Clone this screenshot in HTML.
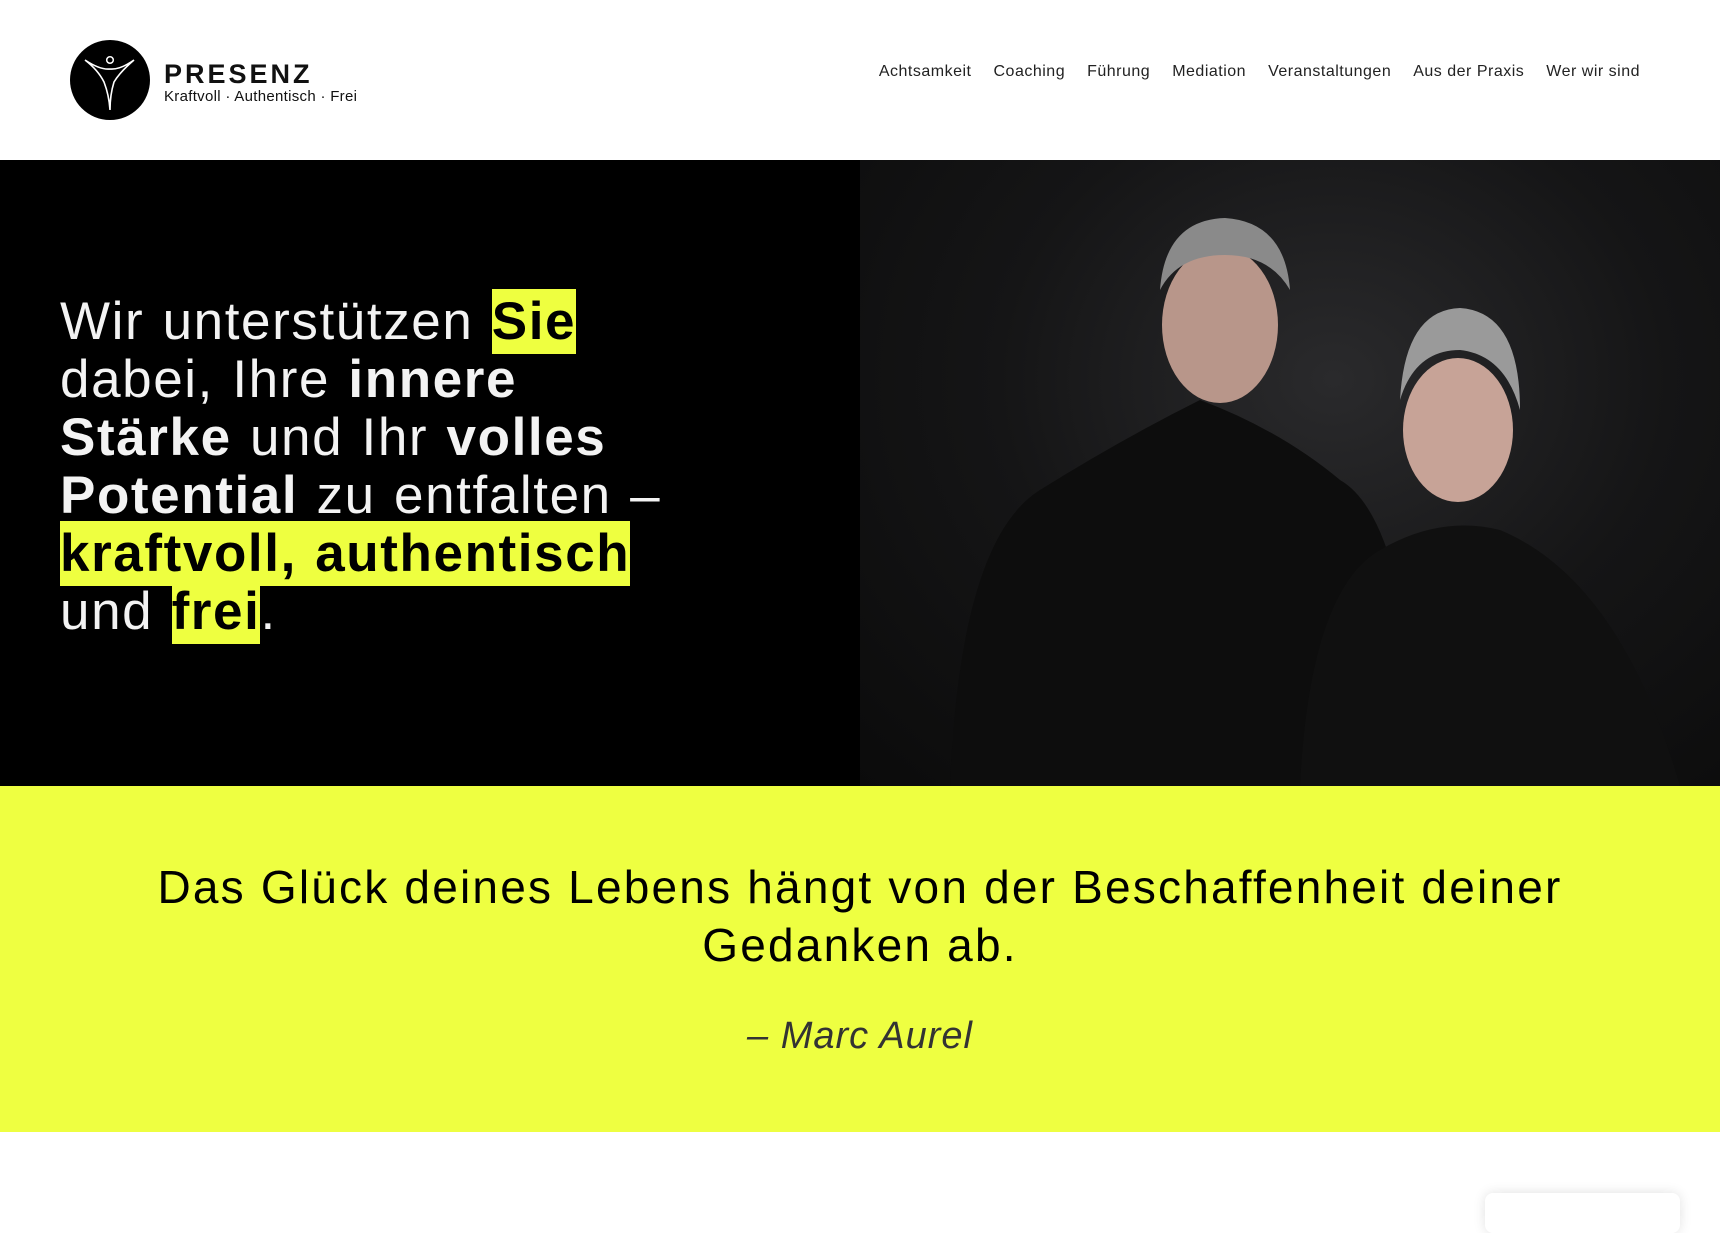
<!DOCTYPE html>
<html><head><meta charset="utf-8">
<style>
*{margin:0;padding:0;box-sizing:border-box}
body{width:1720px;height:1208px;overflow:hidden;background:#fff;font-family:"Liberation Sans",sans-serif;color:#111}
header{height:160px;position:relative}
.logo{position:absolute;left:70px;top:40px;width:80px;height:80px;border-radius:50%;background:#000}
.brand{position:absolute;left:164px;top:60px}
.brand b{display:block;font-size:27px;letter-spacing:3px;font-weight:700;line-height:28px}
.brand span{display:block;font-size:15px;line-height:16px;margin-top:1px;letter-spacing:.3px}
nav{position:absolute;right:80px;top:63px;font-size:16px;color:#222;display:flex;gap:22px;letter-spacing:.5px}
.hero{position:absolute;top:160px;left:0;width:1720px;height:626px;background:#000}
.photo{position:absolute;left:860px;top:0;width:860px;height:626px;background:radial-gradient(ellipse at 55% 35%,#2a2a2c 0%,#151516 50%,#0b0b0b 100%)}
h1{position:absolute;left:60px;top:133px;width:760px;font-size:53px;line-height:58px;font-weight:400;color:#f3f3f3;letter-spacing:1.6px;word-spacing:2px;white-space:nowrap}
h1 strong{font-weight:700}
.hl{background:#eeff40;color:#000;padding:3px 0}
.band{position:absolute;top:786px;left:0;width:1720px;height:346px;background:#eeff41;text-align:center}
.band p{margin-top:72px;font-size:46px;line-height:58px;color:#000;letter-spacing:2.2px}
.band i{display:block;margin-top:41px;font-size:38px;font-weight:300;color:#333;letter-spacing:1px}
.card{position:absolute;left:1485px;top:1193px;width:195px;height:40px;background:#fff;border-radius:8px;box-shadow:0 0 12px rgba(0,0,0,.12)}
</style></head><body>
<header>
<div class="logo"><svg width="80" height="80" viewBox="0 0 80 80"><circle cx="40" cy="20" r="3.3" fill="none" stroke="#fff" stroke-width="1.5"/><path d="M15 20 Q30 30 40 29 Q50 30 64 20 Q50 32 44 42 Q40 55 40 70 Q39 55 34 42 Q28 30 15 20Z" fill="none" stroke="#fff" stroke-width="1.6"/></svg></div>
<div class="brand"><b>PRESENZ</b><span>Kraftvoll · Authentisch · Frei</span></div>
<nav><span>Achtsamkeit</span><span>Coaching</span><span>Führung</span><span>Mediation</span><span>Veranstaltungen</span><span>Aus der Praxis</span><span>Wer wir sind</span></nav>
</header>
<div class="hero">
<h1>Wir unterstützen <strong class="hl">Sie</strong><br>dabei, Ihre <strong>innere</strong><br><strong>Stärke</strong> und Ihr <strong>volles</strong><br><strong>Potential</strong> zu entfalten –<br><strong class="hl">kraftvoll, authentisch</strong><br>und <strong class="hl">frei</strong>.</h1>
<div class="photo"><svg width="860" height="626" viewBox="0 0 860 626">
<path d="M90 626 Q100 380 180 330 Q260 280 340 240 Q420 270 480 320 Q550 360 560 626Z" fill="#0d0d0d"/>
<ellipse cx="360" cy="165" rx="58" ry="78" fill="#b8968a"/>
<path d="M300 130 Q305 60 365 58 Q425 62 430 130 Q410 95 365 95 Q318 95 300 130Z" fill="#8a8a8a"/>
<path d="M440 626 Q450 430 520 390 Q580 355 640 370 Q760 420 820 626Z" fill="#101010"/>
<ellipse cx="598" cy="270" rx="55" ry="72" fill="#c7a397"/>
<path d="M540 240 Q545 150 600 148 Q660 152 660 250 Q645 195 600 190 Q555 190 540 240Z" fill="#9a9a9a"/>
</svg></div>
</div>
<div class="band"><p>Das Glück deines Lebens hängt von der Beschaffenheit deiner<br>Gedanken ab.</p><i>– Marc Aurel</i></div>
<div class="card"></div>
</body></html>
